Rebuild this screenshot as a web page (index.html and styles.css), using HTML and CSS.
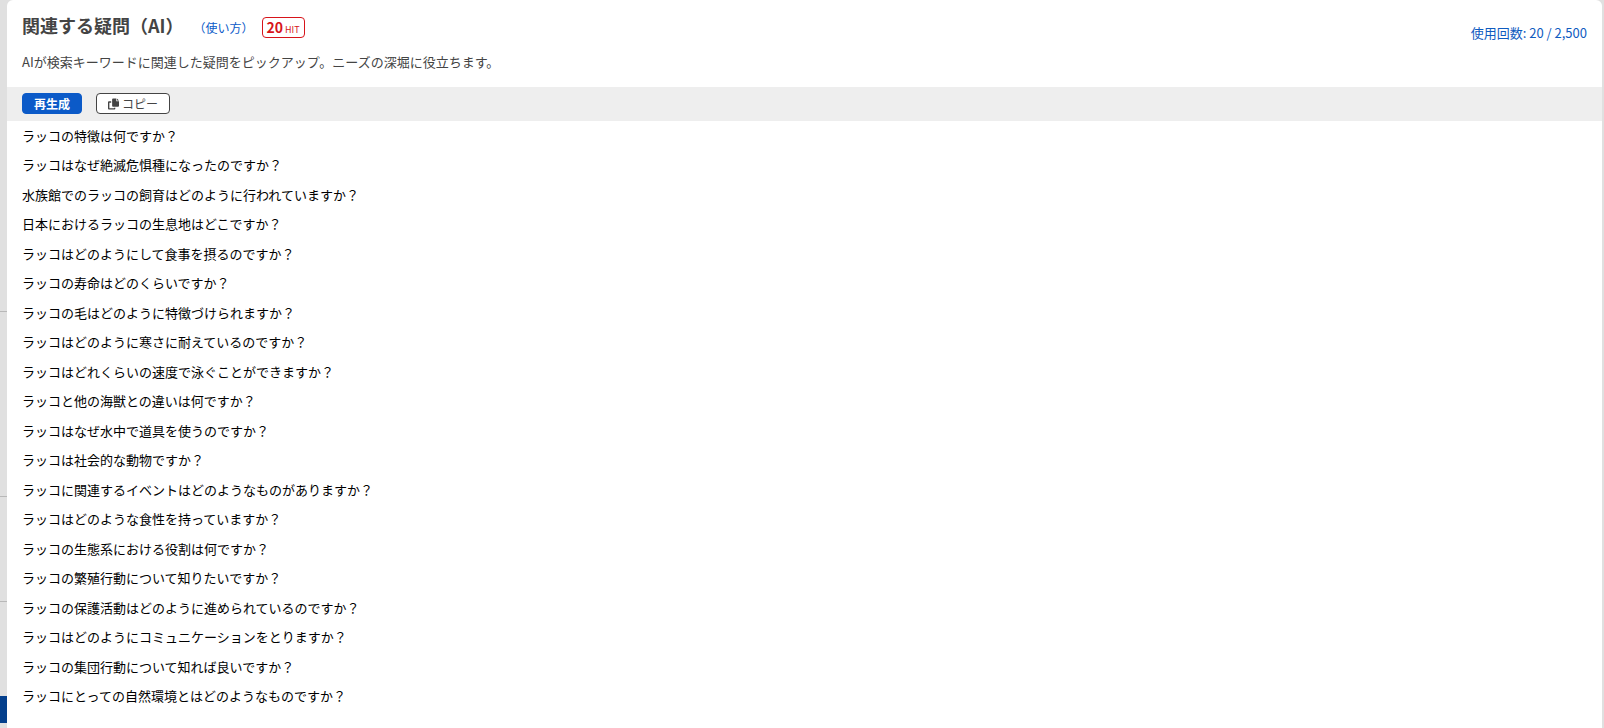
FILE: index.html
```html
<!DOCTYPE html>
<html lang="ja">
<head>
  <meta charset="UTF-8">
  <meta name="viewport" content="width=device-width, initial-scale=1.0">
  <title>関連する疑問（AI）</title>
  <link rel="stylesheet" href="styles.css">
</head>
<body>
  <div class="page">
    <!-- edge of the side menu -->
    <div class="side">
      <div class="side-block first"></div>
      <div class="side-block second"></div>
      <div class="side-block third"></div>
      <div class="side-space"></div>
      <div class="side-active"></div>
    </div>

    <main class="panel">
      <header class="panel-header">
        <div class="title-row">
          <h1>関連する疑問（AI）</h1>
          <a href="#" class="help-link">（使い方）</a>
          <span class="hit"><b>20</b> HIT</span>
          <a href="#" class="usage">使用回数: 20 / 2,500</a>
        </div>
        <p class="lead">AIが検索キーワードに関連した疑問をピックアップ。ニーズの深堀に役立ちます。</p>
      </header>

      <div class="toolbar">
        <button type="button" class="btn btn-primary">再生成</button>
        <button type="button" class="btn btn-copy">
          <svg class="icon" viewBox="0 0 12 12" aria-hidden="true">
            <path d="M5.500 0H9V3H12V8Q12 9 11 9H5.500Q4.500 9 4.500 8V1Q4.500 0 5.500 0ZM9.700 0L12 2.300H9.700Z"/>
            <path d="M3.500 3H1Q0 3 0 4V11Q0 12 1 12H7Q8 12 8 11V10H6.500V10.500H1.500V4.500H3.500Z"/>
          </svg>
          コピー
        </button>
      </div>

      <ul class="questions">
        <li>ラッコの特徴は何ですか？</li>
        <li>ラッコはなぜ絶滅危惧種になったのですか？</li>
        <li>水族館でのラッコの飼育はどのように行われていますか？</li>
        <li>日本におけるラッコの生息地はどこですか？</li>
        <li>ラッコはどのようにして食事を摂るのですか？</li>
        <li>ラッコの寿命はどのくらいですか？</li>
        <li>ラッコの毛はどのように特徴づけられますか？</li>
        <li>ラッコはどのように寒さに耐えているのですか？</li>
        <li>ラッコはどれくらいの速度で泳ぐことができますか？</li>
        <li>ラッコと他の海獣との違いは何ですか？</li>
        <li>ラッコはなぜ水中で道具を使うのですか？</li>
        <li>ラッコは社会的な動物ですか？</li>
        <li>ラッコに関連するイベントはどのようなものがありますか？</li>
        <li>ラッコはどのような食性を持っていますか？</li>
        <li>ラッコの生態系における役割は何ですか？</li>
        <li>ラッコの繁殖行動について知りたいですか？</li>
        <li>ラッコの保護活動はどのように進められているのですか？</li>
        <li>ラッコはどのようにコミュニケーションをとりますか？</li>
        <li>ラッコの集団行動について知れば良いですか？</li>
        <li>ラッコにとっての自然環境とはどのようなものですか？</li>
      </ul>
    </main>
  </div>
</body>
</html>
```

FILE: styles.css
```css
* {
  box-sizing: border-box;
}

body {
  margin: 0;
  background: #e0e0e0;
  color: #444;
  font-family: "Noto Sans CJK JP", sans-serif;
  font-size: 13px;
  line-height: 1.5;
}

a {
  color: #0b5ac8;
  text-decoration: none;
}

.page {
  display: flex;
  min-height: 100vh;
  padding-right: 2px;
}

/* Side menu */
.side {
  display: flex;
  flex-direction: column;
  width: 7px;
  padding-bottom: 5px;
}

.side-block {
  border-bottom: 1px solid #b8b8b8;
}

.first {
  height: 312px;
}

.second {
  height: 185px;
}

.third {
  height: 105px;
}

.side-space {
  flex: 1;
}

.side-active {
  height: 27px;
  background: #043f8c;
}

/* Panel */
.panel {
  flex: 1;
  background: #fff;
  border-radius: 6px 6px 0 0;
}

.panel-header {
  padding: 12px 15px 15px;
}

.title-row {
  display: flex;
  align-items: baseline;
  height: 30px;
}

h1 {
  margin: 0;
  font-size: 18px;
  font-weight: 700;
}

.help-link {
  margin: 0 8px 0 10px;
  font-size: 12px;
}

.hit {
  height: 21px;
  padding: 0 4px;
  border: 1px solid #d7141a;
  border-radius: 4px;
  color: #d7141a;
  font-size: 9px;
  line-height: 19px;
}

.hit b {
  font-size: 14px;
}

.usage {
  align-self: flex-end;
  margin-left: auto;
  color: #0f5bbf;
}

.lead {
  margin: 10px 0 0;
}

/* Toolbar */
.toolbar {
  display: flex;
  align-items: center;
  gap: 14px;
  height: 34px;
  padding: 0 15px;
  background: #eee;
}

.btn {
  display: flex;
  align-items: center;
  height: 21px;
  padding: 0 11px;
  border: 1px solid #444;
  border-radius: 4px;
  font-family: inherit;
  font-size: 12px;
  line-height: 19px;
  cursor: pointer;
}

.btn-primary {
  border-color: #0b5ac8;
  background: #0b5ac8;
  color: #fff;
  font-weight: 700;
}

.btn-copy {
  gap: 3px;
  background: #fff;
  color: #444;
}

.icon {
  width: 11px;
  height: 12px;
  fill: #444;
}

/* Questions */
.questions {
  margin: 0;
  padding: 0 15px;
  color: #000;
  list-style: none;
}

.questions li {
  padding: 5px 0;
}
```
